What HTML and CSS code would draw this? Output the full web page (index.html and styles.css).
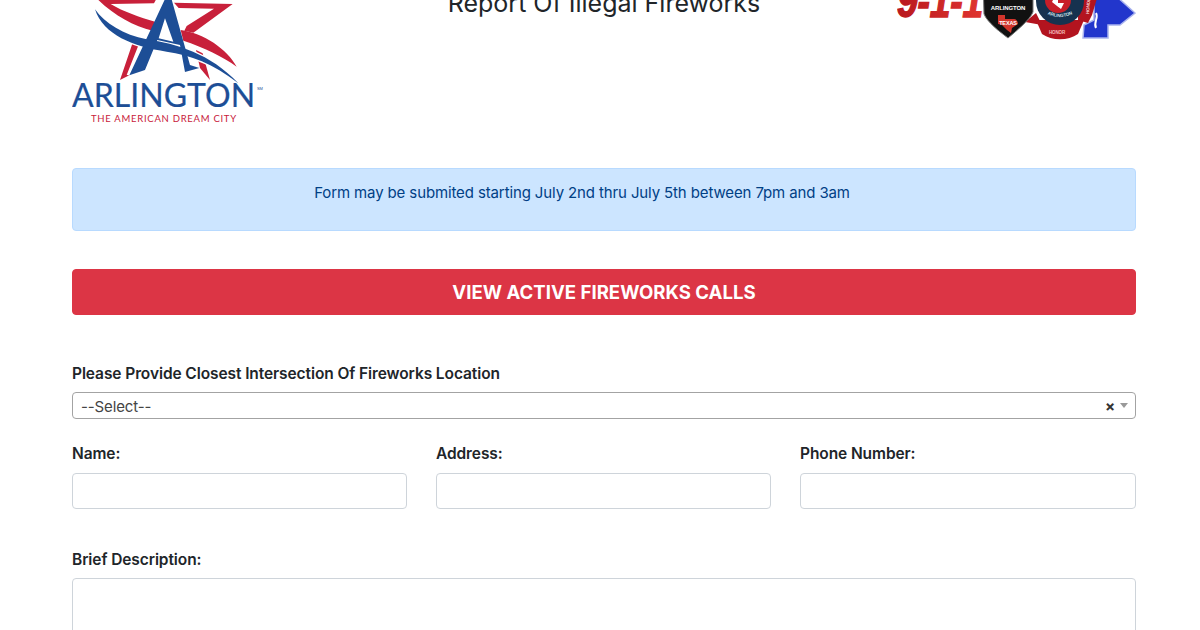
FILE: index.html
```html
<!DOCTYPE html>
<html lang="en">
<head>
  <meta charset="UTF-8" />
  <title>Report Of Illegal Fireworks</title>
  <link rel="stylesheet" href="styles.css">
</head>
<body>
<div class="container">
  <div class="header">
    <svg class="logo" viewBox="72 -30 192 154" aria-label="City of Arlington">
      <g transform="translate(90 0) scale(.3333)">
        <!-- red star -->
        <g fill="#c8203a">
          <path d="M20 -5 L200 -5 L192 10 L62 12 C100 35 150 52 195 65 L188 92 C130 78 70 45 20 -5 Z"/>
          <path d="M252 8 L428 12 L310 98 L283 92 L290 78 L372 26 L266 24 Z"/>
          <path d="M272 90 C340 98 412 148 440 200 C400 170 340 142 280 122 Z"/>
          <path d="M318 150 L338 160 L360 240 L330 204 Z"/>
          <path d="M128 128 L146 134 L110 225 L118 226 L90 240 Z"/>
        </g>
        <!-- white edge round the swoosh, then the A, then the swoosh -->
        <path fill="#fff" stroke="#fff" stroke-width="8" d="M15 28 C45 70 100 105 170 118 C260 132 360 160 445 250 C370 190 300 165 230 155 C130 140 40 105 15 28 Z"/>
        <path fill="#1d4e96" fill-rule="evenodd" d="M226 -5 L244 -5 L300 195 L328 204 L285 216 L270 135 L202 120 L165 210 L118 226 Z M225 55 L206 115 L250 125 Z"/>
        <path fill="#1d4e96" d="M15 28 C45 70 100 105 170 118 C260 132 360 160 445 250 C370 190 300 165 230 155 C130 140 40 105 15 28 Z"/>
      </g>
      <text class="logo-name" x="72" y="107" textLength="183">ARLINGTON</text>
      <text class="logo-sm" x="257" y="90">SM</text>
      <text class="logo-tag" x="91" y="122" textLength="145">THE AMERICAN DREAM CITY</text>
    </svg>
    <h1 class="title">Report Of Illegal Fireworks</h1>
    <svg class="badges" viewBox="897 -30 239 70" aria-label="Arlington emergency services">
      <defs>
        <linearGradient id="red911" x1="0" y1="0" x2="1" y2="0">
          <stop offset="0" stop-color="#b8181f"/>
          <stop offset="1" stop-color="#e0352f"/>
        </linearGradient>
        <path id="badge-arc" d="M1042 11 Q1060 23 1078 11"/>
      </defs>
      <text class="nine" x="897" y="17" textLength="86" lengthAdjust="spacingAndGlyphs" fill="url(#red911)" stroke="url(#red911)">9-1-1</text>
      <!-- star of life -->
      <path fill="#2236cc" stroke="#aab4ee" stroke-width="1.5" d="M1083 38 L1084 25 L1094 20 L1094 -5 L1115 -5 L1135 13 L1120 25 L1108 25 L1108 38 Z"/>
      <path d="M1096 13 C1099 18 1093 22 1096 28" fill="none" stroke="#fff" stroke-width="2"/>
      <!-- fire badge -->
      <g fill="#b3141f">
        <path d="M1036 20 L1042 34 C1052 41 1068 41 1078 34 L1084 20 Z"/>
        <path d="M1025 22 L1036 13 L1042 25 Z"/>
        <path d="M1078 -5 L1098 -5 L1092 15 L1088 23 L1078 20 Z"/>
      </g>
      <circle cx="1060" cy="1" r="24" fill="#16324f"/>
      <circle cx="1058" cy="0" r="13" fill="#c81e28"/>
      <path fill="#fff" d="M1054 -2 L1058 -2 L1058 3 L1064 3 L1061 9 L1057 6 L1052 2 Z"/>
      <text class="badge-txt" fill="#cfe0ea" font-size="4.5"><textPath href="#badge-arc" startOffset="50%" text-anchor="middle">ARLINGTON</textPath></text>
      <text class="badge-txt" x="1057" y="34" text-anchor="middle" fill="#f3b9b9" font-size="4.5">HONOR</text>
      <text class="badge-txt" transform="translate(1089 14) rotate(-85)" fill="#f3d0d0" font-size="4.5">HONOR</text>
      <!-- police shield -->
      <path fill="#111" stroke="#777" stroke-width="1" d="M983 -20 L1033 -20 L1033 12 C1030 20 1015 32 1008 38 C1000 32 987 22 984 14 Z"/>
      <text class="badge-txt" x="1008" y="10" text-anchor="middle" fill="#fff" font-size="6">ARLINGTON</text>
      <path fill="#d2352c" d="M998 15 L1005 15 L1005 19 L1014 19 C1016 19 1018 21 1018 24 L1012 28 L1011 33 L1007 30 L1002 25 L998 24 Z"/>
      <text class="badge-txt" x="1008" y="25" text-anchor="middle" fill="#fff" font-size="5.5">TEXAS</text>
    </svg>
  </div>

  <div class="notice">Form may be submited starting July 2nd thru July 5th between 7pm and 3am</div>

  <button class="btn-calls">VIEW ACTIVE FIREWORKS CALLS</button>

  <form class="report-form">
    <div class="field">
      <label>Please Provide Closest Intersection Of Fireworks Location</label>
      <div class="select-box">
        <span>--Select--</span>
        <span class="select-clear">×</span>
        <span class="select-arrow"></span>
      </div>
    </div>
    <div class="form-row">
      <div class="field">
        <label for="name">Name:</label>
        <input type="text" id="name" />
      </div>
      <div class="field">
        <label for="address">Address:</label>
        <input type="text" id="address" />
      </div>
      <div class="field">
        <label for="phone">Phone Number:</label>
        <input type="text" id="phone" />
      </div>
    </div>
    <div class="field">
      <label for="description">Brief Description:</label>
      <textarea id="description"></textarea>
    </div>
  </form>
</div>
</body>
</html>
```

FILE: styles.css
```css
html, body {
  height: 630px;
  overflow: hidden;
}
body {
  font-family: Inter, "Liberation Sans", sans-serif;
  font-size: 15px;
  letter-spacing: -0.12px;
  color: #212529;
  background: #fff;
  margin: 0;
}
.container {
  width: 1064px;
  margin: -30px 0 0 72px;
}
.header {
  display: grid;
  grid-template-columns: 1fr auto 1fr;
  align-items: start;
  height: 198px;
}
.logo {
  width: 192px;
  height: 154px;
}
.title {
  margin: 19px 0 0;
  font-size: 25px;
  font-weight: 400;
  letter-spacing: 0;
  line-height: 29px;
  color: #212529;
}
.badges {
  justify-self: end;
  width: 239px;
  height: 70px;
}
.logo-name {
  font-family: Lato, sans-serif;
  font-size: 32px;
  fill: #1d4e96;
  stroke: #1d4e96;
  stroke-width: 0.2px;
}
.logo-sm {
  font-family: "Liberation Sans", sans-serif;
  font-size: 4px;
  fill: #1d4e96;
}
.logo-tag {
  font-family: Lato, sans-serif;
  font-size: 9.5px;
  fill: #c8203a;
}
.nine {
  font-family: "Liberation Sans", sans-serif;
  font-size: 46px;
  font-weight: 700;
  font-style: italic;
  stroke-width: 1.5px;
}
.badge-txt {
  font-family: "Liberation Sans", sans-serif;
  font-weight: 700;
}
.notice {
  box-sizing: border-box;
  height: 63px;
  padding: 13px 64px 11px 20px;
  color: #004085;
  background: #cce5ff;
  border: 1px solid #b8daff;
  border-radius: 4px;
  text-align: center;
  line-height: 22px;
}
.btn-calls {
  display: block;
  width: 100%;
  height: 46px;
  margin-top: 38px;
  color: #fff;
  background: #dc3545;
  border: 1px solid #dc3545;
  border-radius: 4px;
  font-family: inherit;
  font-size: 18.6px;
  font-weight: 700;
  letter-spacing: 0;
}
.report-form {
  margin-top: 49px;
}
.field label {
  display: block;
  margin-bottom: 8px;
  font-size: 15.5px;
  font-weight: 600;
  letter-spacing: -0.09px;
  line-height: 20px;
}
.select-box {
  box-sizing: border-box;
  display: flex;
  align-items: center;
  height: 27px;
  padding: 1px 7px 0 8px;
  border: 1px solid #a3a3a3;
  border-radius: 4px;
  line-height: 25px;
  color: #444;
}
.select-clear {
  margin-left: auto;
  font-weight: 700;
  color: #333;
}
.select-arrow {
  width: 0;
  height: 0;
  margin-left: 5px;
  margin-bottom: 1px;
  border-style: solid;
  border-width: 5px 4px 0;
  border-color: #999 transparent transparent;
}
.form-row {
  display: grid;
  grid-template-columns: 335px 335px 336px;
  column-gap: 29px;
  margin-top: 25px;
}
.form-row label {
  margin-bottom: 9px;
}
input, textarea {
  box-sizing: border-box;
  display: block;
  width: 100%;
  border: 1px solid #ced4da;
  border-radius: 4px;
  background: #fff;
}
input {
  height: 36px;
}
textarea {
  height: 120px;
  resize: none;
}
.form-row + .field {
  margin-top: 41px;
}
```
